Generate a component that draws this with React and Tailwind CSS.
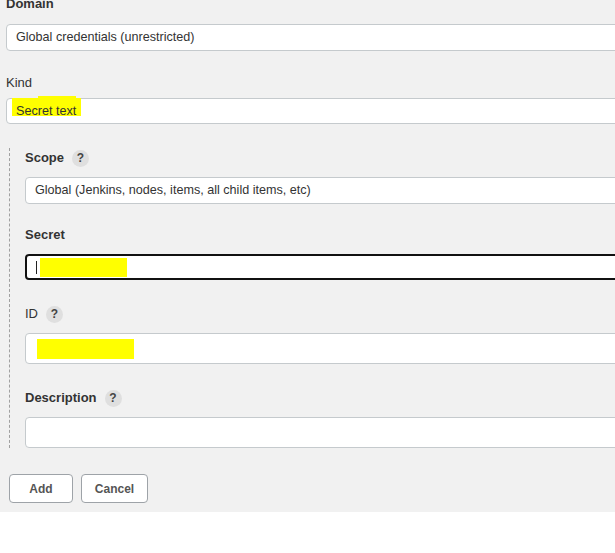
import React from "react";

const HelpIcon = () => (
  <span className="ml-[8px] inline-flex h-[17px] w-[17px] items-center justify-center rounded-full bg-[#dfdfdf] text-[12px] font-bold text-[#444]">
    ?
  </span>
);

const Field = ({ children, className, border = "border border-[#c5cacd]" }) => (
  <div
    className={
      "flex w-[700px] items-center rounded-[4px] bg-white px-[9px] text-[12.6px] text-[#333] " +
      border +
      " " +
      className
    }
  >
    {children}
  </div>
);

export default function App() {
  return (
    <div
      className="w-[615px] h-[553px] overflow-hidden bg-white"
      style={{ fontFamily: '"Liberation Sans", Arial, sans-serif' }}
    >
      <div className="bg-[#f1f1f1] px-[6px] pb-[9px]">
        {/* Domain */}
        <div className="-mt-[6px] h-[20px] text-[13px] font-bold leading-[20px] text-[#333]">Domain</div>
        <Field className="mt-[10px] h-[27px]">Global credentials (unrestricted)</Field>

        {/* Kind */}
        <div className="mt-[22px] h-[20px] text-[13px] leading-[20px] text-[#333]">Kind</div>
        <Field className="mt-[5px] h-[26px] px-[8px]">
          <span className="relative">
            <span className="absolute left-[-4px] top-[-4px] h-[18px] w-[69px] bg-[#ffff00]" />
            <span className="absolute left-[22px] top-[-6px] h-[4px] w-[38px] bg-[#ffff00]" />
            <span className="relative">Secret text</span>
          </span>
        </Field>

        {/* nested block */}
        <div className="mt-[25px] ml-[3px] border-l border-dashed border-[#a0a0a0] pl-[15px]">
          <div className="-mt-[1px] flex h-[20px] items-center text-[13px] font-bold text-[#333]">
            Scope
            <HelpIcon />
          </div>
          <Field className="mt-[9px] h-[27px]">Global (Jenkins, nodes, items, all child items, etc)</Field>

          <div className="mt-[21px] flex h-[20px] items-center text-[13px] font-bold text-[#333]">Secret</div>
          <Field className="mt-[9px] h-[26px] px-[6px]" border="border-2 border-[#111]">
            <span className="h-[13px] w-[1px] bg-[#222]" />
            <span className="ml-[3px] h-[19px] w-[87px] bg-[#ffff00]" />
          </Field>

          <div className="mt-[24px] flex h-[20px] items-center text-[13px] text-[#333]">
            ID
            <HelpIcon />
          </div>
          <Field className="mt-[9px] h-[31px] px-[11px]">
            <span className="h-[20px] w-[97px] bg-[#ffff00]" />
          </Field>

          <div className="mt-[24px] flex h-[20px] items-center text-[13px] font-bold text-[#333]">
            Description
            <HelpIcon />
          </div>
          <Field className="mt-[9px] h-[31px]" />
        </div>

        {/* buttons */}
        <div className="mt-[26px] flex gap-[8px] pl-[3px]">
          <button className="h-[29px] w-[64px] rounded-[4px] border border-[#9ea3a8] bg-white text-[12px] font-bold text-[#555]">
            Add
          </button>
          <button className="h-[29px] w-[67px] rounded-[4px] border border-[#9ea3a8] bg-white text-[12px] font-bold text-[#555]">
            Cancel
          </button>
        </div>
      </div>
    </div>
  );
}
